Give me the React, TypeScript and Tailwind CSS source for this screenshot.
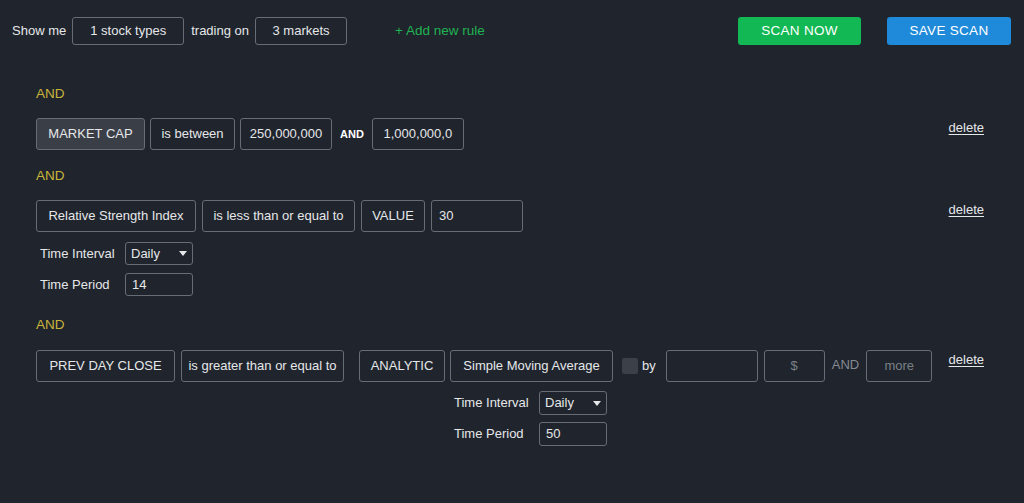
import React from "react";

const font = { fontFamily: '"Liberation Sans", Arial, sans-serif' };

const Box = ({ w, children, active = false, left = false, muted = false }: { w: string; children?: React.ReactNode; active?: boolean; left?: boolean; muted?: boolean }) => (
  <div
    className={`${w} h-[32px] shrink-0 flex items-center rounded-[3px] border border-[#686d75] text-[13px] ${
      left ? "justify-start pl-[7px]" : "justify-center"
    } ${active ? "bg-[#3a3f47]" : "bg-[#1f242d]"} ${muted ? "text-[#7b8088]" : "text-[#e6e7e9]"}`}
  >
    {children}
  </div>
);

const Caret = () => (
  <svg width="8" height="5" viewBox="0 0 8 5" className="mr-[5px]">
    <path d="M0 0 L8 0 L4 5 Z" fill="#e6e7e9" />
  </svg>
);

const TimeFields = ({ period, h, gap }: { period: string; h: string; gap: string }) => (
  <div className={`flex flex-col ${gap} pl-[4px]`}>
    <div className="flex items-center">
      <span className="w-[85px] text-[13px] text-[#e6e7e9]">Time Interval</span>
      <div className={`w-[68px] ${h} flex items-center justify-between rounded-[3px] border border-[#686d75] pl-[5px] text-[13px] text-[#e6e7e9]`}>
        <span>Daily</span>
        <Caret />
      </div>
    </div>
    <div className="flex items-center">
      <span className="w-[85px] text-[13px] text-[#e6e7e9]">Time Period</span>
      <div className={`w-[68px] ${h} flex items-center rounded-[3px] border border-[#686d75] pl-[6px] text-[13px] text-[#e6e7e9]`}>
        {period}
      </div>
    </div>
  </div>
);

const AndLabel = ({ mt }: { mt: string }) => (
  <div className={`${mt} h-[20px] leading-[20px] text-[13.5px] text-[#c9b43b]`}>AND</div>
);

const Delete = () => (
  <a className="mt-[2px] text-[13px] leading-[16px] text-[#e6e7e9] underline underline-offset-2 shrink-0">delete</a>
);

export default function App() {
  return (
    <div style={font} className="min-h-[503px] w-full bg-[#1f242d] text-[#e6e7e9]">
      {/* top bar */}
      <div className="flex items-center pl-[12px] pr-[13px] pt-[17px]">
        <span className="text-[13px]">Show me</span>
        <div className="ml-[6px] w-[112px] h-[28px] flex items-center justify-center rounded-[3px] border border-[#686d75] text-[13px]">1 stock types</div>
        <span className="ml-[7px] text-[13px]">trading on</span>
        <div className="ml-[6px] w-[92px] h-[28px] flex items-center justify-center rounded-[3px] border border-[#686d75] text-[13px]">3 markets</div>
        <span className="ml-[48px] text-[13.5px] text-[#1fb351]">+ Add new rule</span>
        <div className="flex-1" />
        <button className="w-[123px] h-[28px] rounded-[3px] bg-[#12b853] text-[13.5px] tracking-[0.3px] text-white">SCAN NOW</button>
        <button className="ml-[26px] w-[124px] h-[28px] rounded-[3px] bg-[#1f8ad9] text-[13.5px] tracking-[0.3px] text-white">SAVE SCAN</button>
      </div>

      <div className="pl-[36px] pr-[40px]">
        <AndLabel mt="mt-[39px]" />
        <div className="mt-[14px] flex items-start justify-between">
          <div className="flex items-center gap-[5px]">
            <Box w="w-[109px]" active>MARKET CAP</Box>
            <Box w="w-[85px]">is between</Box>
            <Box w="w-[92px]">250,000,000</Box>
            <span className="mx-[3px] text-[11px] font-bold text-white">AND</span>
            <Box w="w-[92px]">1,000,000,0</Box>
          </div>
          <Delete />
        </div>

        <AndLabel mt="mt-[16px]" />
        <div className="mt-[14px] flex items-start justify-between">
          <div className="flex flex-col">
            <div className="flex items-center gap-[6px]">
              <Box w="w-[160px]">Relative Strength Index</Box>
              <Box w="w-[153px]">is less than or equal to</Box>
              <Box w="w-[64px]">VALUE</Box>
              <Box w="w-[92px]" left>30</Box>
            </div>
            <div className="mt-[10px]">
              <TimeFields period="14" h="h-[23px]" gap="gap-[8px]" />
            </div>
          </div>
          <Delete />
        </div>

        <AndLabel mt="mt-[19px]" />
        <div className="mt-[15px] flex items-start justify-between">
          <div className="flex items-start">
            <Box w="w-[139px]">PREV DAY CLOSE</Box>
            <div className="ml-[6px]">
              <Box w="w-[163px]">is greater than or equal to</Box>
            </div>
            <div className="ml-[15px]">
              <Box w="w-[86px]">ANALYTIC</Box>
            </div>
            <div className="ml-[5px] flex flex-col">
              <Box w="w-[163px]">Simple Moving Average</Box>
              <div className="mt-[9px]">
                <TimeFields period="50" h="h-[24px]" gap="gap-[7px]" />
              </div>
            </div>
            <div className="ml-[9px] h-[32px] flex items-center">
              <div className="w-[16px] h-[16px] rounded-[2px] bg-[#3b4049]" />
              <span className="ml-[4px] text-[13px]">by</span>
            </div>
            <div className="ml-[10px]">
              <Box w="w-[92px]" />
            </div>
            <div className="ml-[6px]">
              <Box w="w-[61px]" muted>$</Box>
            </div>
            <span className="ml-[7px] h-[32px] leading-[30px] text-[13px] text-[#858a91]">AND</span>
            <div className="ml-[7px]">
              <Box w="w-[66px]" muted>more</Box>
            </div>
          </div>
          <Delete />
        </div>
      </div>
    </div>
  );
}
